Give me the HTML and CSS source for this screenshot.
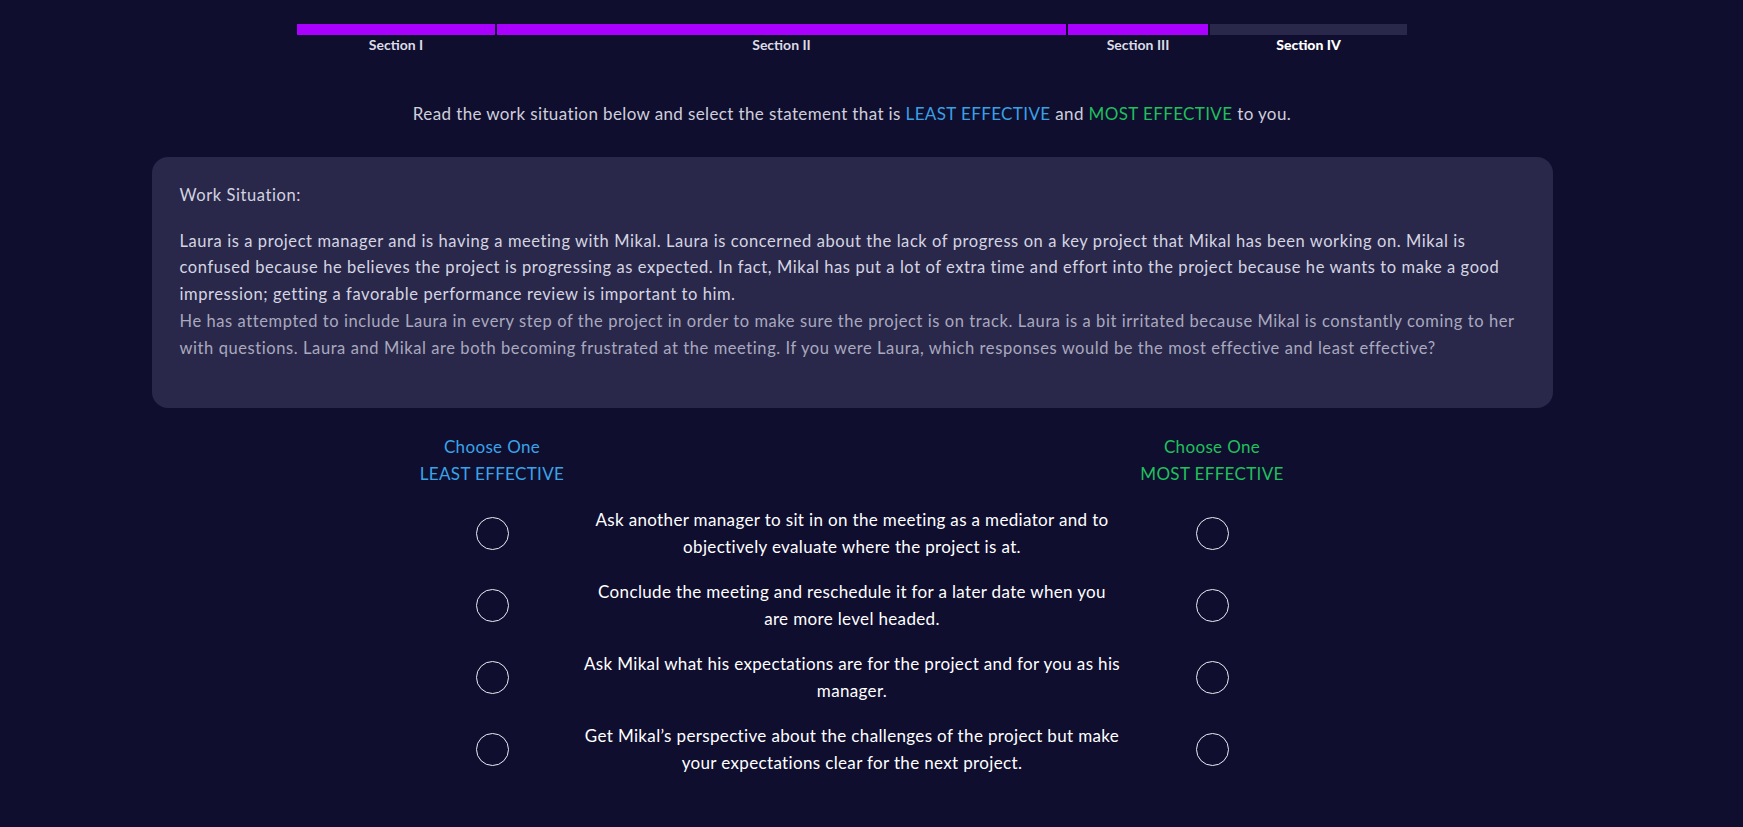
FILE: index.html
```html
<!DOCTYPE html>
<html lang="en">
<head>
<meta charset="utf-8">
<title>Work Situation</title>
<link rel="stylesheet" href="styles.css">
</head>
<body>
<div class="page">
  <div class="progress">
    <div class="seg s1 done"><div class="bar"></div><span class="label">Section I</span></div>
    <div class="seg s2 done"><div class="bar"></div><span class="label">Section II</span></div>
    <div class="seg s3 done"><div class="bar"></div><span class="label">Section III</span></div>
    <div class="seg s4 current"><div class="bar"></div><span class="label">Section IV</span></div>
  </div>

  <p class="instr">Read the work situation below and select the statement that is <span class="least">LEAST EFFECTIVE</span> and <span class="most">MOST EFFECTIVE</span> to you.</p>

  <section class="card">
    <p class="card-title">Work Situation:</p>
    <p class="p1">Laura is a project manager and is having a meeting with Mikal. Laura is concerned about the lack of progress on a key project that Mikal has been working on. Mikal is confused because he believes the project is progressing as expected. In fact, Mikal has put a lot of extra time and effort into the project because he wants to make a good impression; getting a favorable performance review is important to him.</p>
    <p class="p2">He has attempted to include Laura in every step of the project in order to make sure the project is on track. Laura is a bit irritated because Mikal is constantly coming to her with questions. Laura and Mikal are both becoming frustrated at the meeting. If you were Laura, which responses would be the most effective and least effective?</p>
  </section>

  <div class="choices">
    <div class="head least">Choose One<br>LEAST EFFECTIVE</div>
    <div class="head-spacer"></div>
    <div class="head most">Choose One<br>MOST EFFECTIVE</div>

    <div class="cell"><span class="radio"></span></div>
    <div class="stmt">Ask another manager to sit in on the meeting as a mediator and to<br>objectively evaluate where the project is at.</div>
    <div class="cell"><span class="radio"></span></div>

    <div class="cell"><span class="radio"></span></div>
    <div class="stmt">Conclude the meeting and reschedule it for a later date when you<br>are more level headed.</div>
    <div class="cell"><span class="radio"></span></div>

    <div class="cell"><span class="radio"></span></div>
    <div class="stmt">Ask Mikal what his expectations are for the project and for you as his<br>manager.</div>
    <div class="cell"><span class="radio"></span></div>

    <div class="cell"><span class="radio"></span></div>
    <div class="stmt">Get Mikal’s perspective about the challenges of the project but make<br>your expectations clear for the next project.</div>
    <div class="cell"><span class="radio"></span></div>
  </div>
</div>
</body>
</html>
```

FILE: styles.css
```css
* { box-sizing: border-box; }

html, body {
  margin: 0;
  padding: 0;
  background: #0f0e2f;
}

body {
  font-family: "Lato", "Noto Sans", sans-serif;
  color: #d3d3e0;
  height: 827px;
  overflow: hidden;
}

.page {
  width: 1704px;
  display: flex;
  flex-direction: column;
  align-items: center;
}

/* progress */
.progress {
  display: flex;
  gap: 2px;
  margin-top: 24px;
}
.seg {
  display: flex;
  flex-direction: column;
  align-items: center;
}
.s1 { width: 198px; }
.s2 { width: 569px; }
.s3 { width: 140px; }
.s4 { width: 197px; }
.bar {
  width: 100%;
  height: 11px;
  background: #aa00ff;
}
.current .bar { background: #29284a; }
.label {
  margin-top: 2px;
  font-size: 14px;
  line-height: 16px;
  font-weight: 700;
  color: #dcdce6;
}
.current .label {
  color: #ffffff;
  font-weight: 900;
}

/* instruction */
.instr {
  margin: 49px 0 0;
  font-size: 17px;
  line-height: 24px;
  letter-spacing: 0.38px;
  color: #cfcfdc;
}
.least { color: #3aa0e4; }
.most { color: #1fbf5c; }

/* card */
.card {
  margin-top: 31px;
  width: 1401px;
  background: #29284a;
  border-radius: 16px;
  padding: 25px 27px 47px 28px;
  font-size: 16.5px;
  line-height: 26.7px;
  letter-spacing: 0.58px;
}
.card p { margin: 0; }
.card-title {
  color: #d3d3e0;
  margin-bottom: 19px !important;
}
.p1 { color: #d5d5e2; }
.p2 { color: #a9a9bf; }

/* choices */
.choices {
  margin-top: 25px;
  display: grid;
  grid-template-columns: 180px 540px 180px;
  row-gap: 18px;
  font-size: 17px;
  line-height: 27px;
  letter-spacing: 0.35px;
}
.head {
  text-align: center;
  margin-bottom: 1px;
}
.head.least { color: #3aa3e8; }
.head.most { color: #20c05c; }
.cell {
  display: flex;
  align-items: center;
  justify-content: center;
}
.radio {
  width: 33px;
  height: 33px;
  border: 1px solid #ececf4;
  border-radius: 50%;
}
.stmt {
  text-align: center;
  color: #ffffff;
}
```
